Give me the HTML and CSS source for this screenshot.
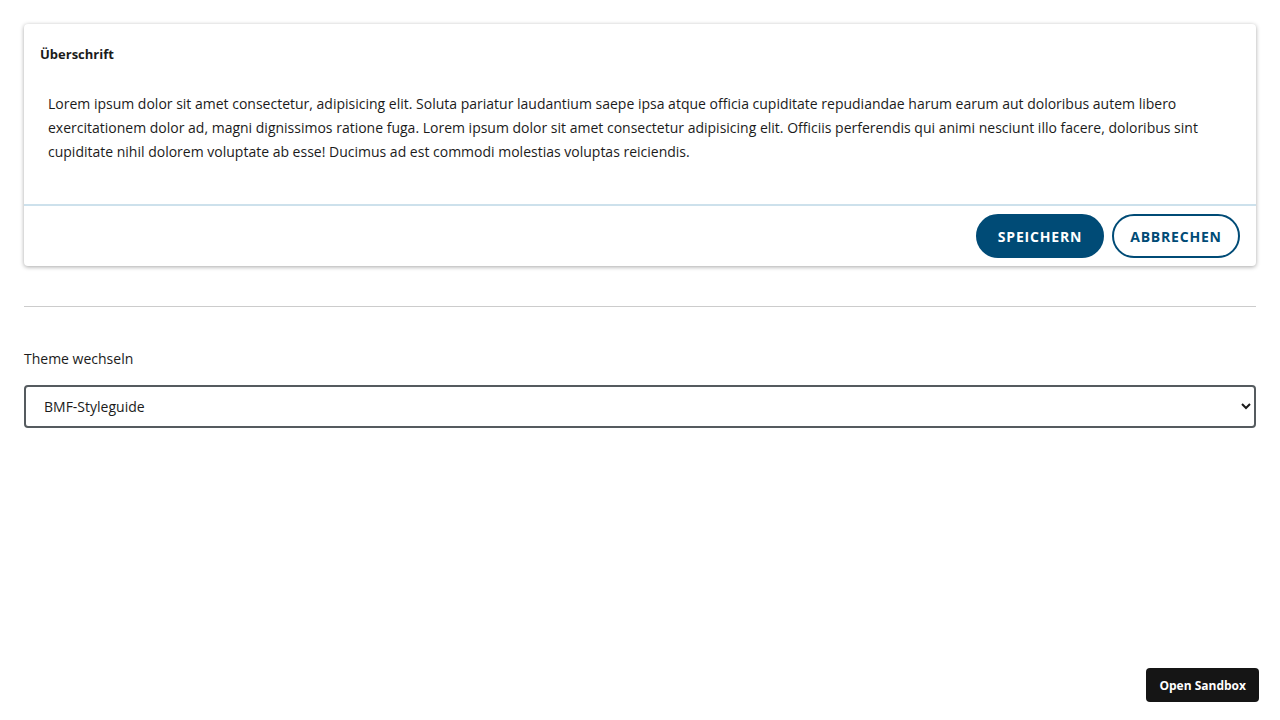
FILE: index.html
```html
<!DOCTYPE html>
<html lang="de">
<head>
<meta charset="utf-8">
<title>Card</title>
<link rel="stylesheet" href="styles.css">
</head>
<body>
<main class="page">
  <section class="card">
    <header class="card-header">Überschrift</header>
    <div class="card-body">
      <p>Lorem ipsum dolor sit amet consectetur, adipisicing elit. Soluta pariatur laudantium saepe ipsa atque officia cupiditate repudiandae harum earum aut doloribus autem libero exercitationem dolor ad, magni dignissimos ratione fuga. Lorem ipsum dolor sit amet consectetur adipisicing elit. Officiis perferendis qui animi nesciunt illo facere, doloribus sint cupiditate nihil dolorem voluptate ab esse! Ducimus ad est commodi molestias voluptas reiciendis.</p>
    </div>
    <footer class="card-footer">
      <button class="btn btn-primary">SPEICHERN</button>
      <button class="btn btn-secondary">ABBRECHEN</button>
    </footer>
  </section>
  <hr class="sep">
  <div class="theme">
    <label class="theme-label" for="theme">Theme wechseln</label>
    <select id="theme" class="theme-select">
      <option>BMF-Styleguide</option>
    </select>
  </div>
</main>
<button class="sandbox">Open Sandbox</button>
</body>
</html>
```

FILE: styles.css
```css
html, body {
  margin: 0;
  padding: 0;
  background: #fff;
}
body {
  font-family: "Open Sans", Lato, sans-serif;
  font-size: 14px;
  color: #1b1b1b;
}
.page {
  padding: 24px;
}
.card {
  border-radius: 4px;
  box-shadow: 0 1px 4px rgba(0, 0, 0, 0.35);
  background: #fff;
}
.card-header {
  padding: 18px 16px 14px;
  font-size: 13px;
  font-weight: 700;
  line-height: 24px;
}
.card-body {
  padding: 12px 24px 40px;
}
.card-body p {
  margin: 0;
  line-height: 24px;
}
.card-footer {
  border-top: 2px solid #cde1ec;
  display: flex;
  justify-content: flex-end;
  gap: 8px;
  padding: 8px 16px;
}
.btn {
  font-family: inherit;
  height: 44px;
  width: 128px;
  border-radius: 22px;
  font-size: 14px;
  font-weight: 700;
  letter-spacing: 0.8px;
  cursor: pointer;
}
.btn-primary {
  background: #004b76;
  color: #fff;
  border: 2px solid #004b76;
}
.btn-secondary {
  background: #fff;
  color: #004b76;
  border: 2px solid #004b76;
}
.sep {
  margin: 40px 0 0;
  border: 0;
  border-top: 1px solid #cccccc;
}
.theme {
  padding-top: 42px;
  display: flex;
  flex-direction: column;
  gap: 16px;
}
.theme-label {
  line-height: 20px;
}
.theme-select {
  font-family: inherit;
  font-size: 14px;
  height: 43px;
  border: 2px solid #555b5f;
  border-radius: 4px;
  padding: 0 14px;
  background: #fff;
  color: #1b1b1b;
}
.sandbox {
  position: fixed;
  right: 21px;
  bottom: 18px;
  background: #151515;
  color: #fff;
  border: 0;
  border-radius: 4px;
  font-family: inherit;
  font-size: 12px;
  font-weight: 700;
  padding: 0 13px;
  height: 34px;
}
```
